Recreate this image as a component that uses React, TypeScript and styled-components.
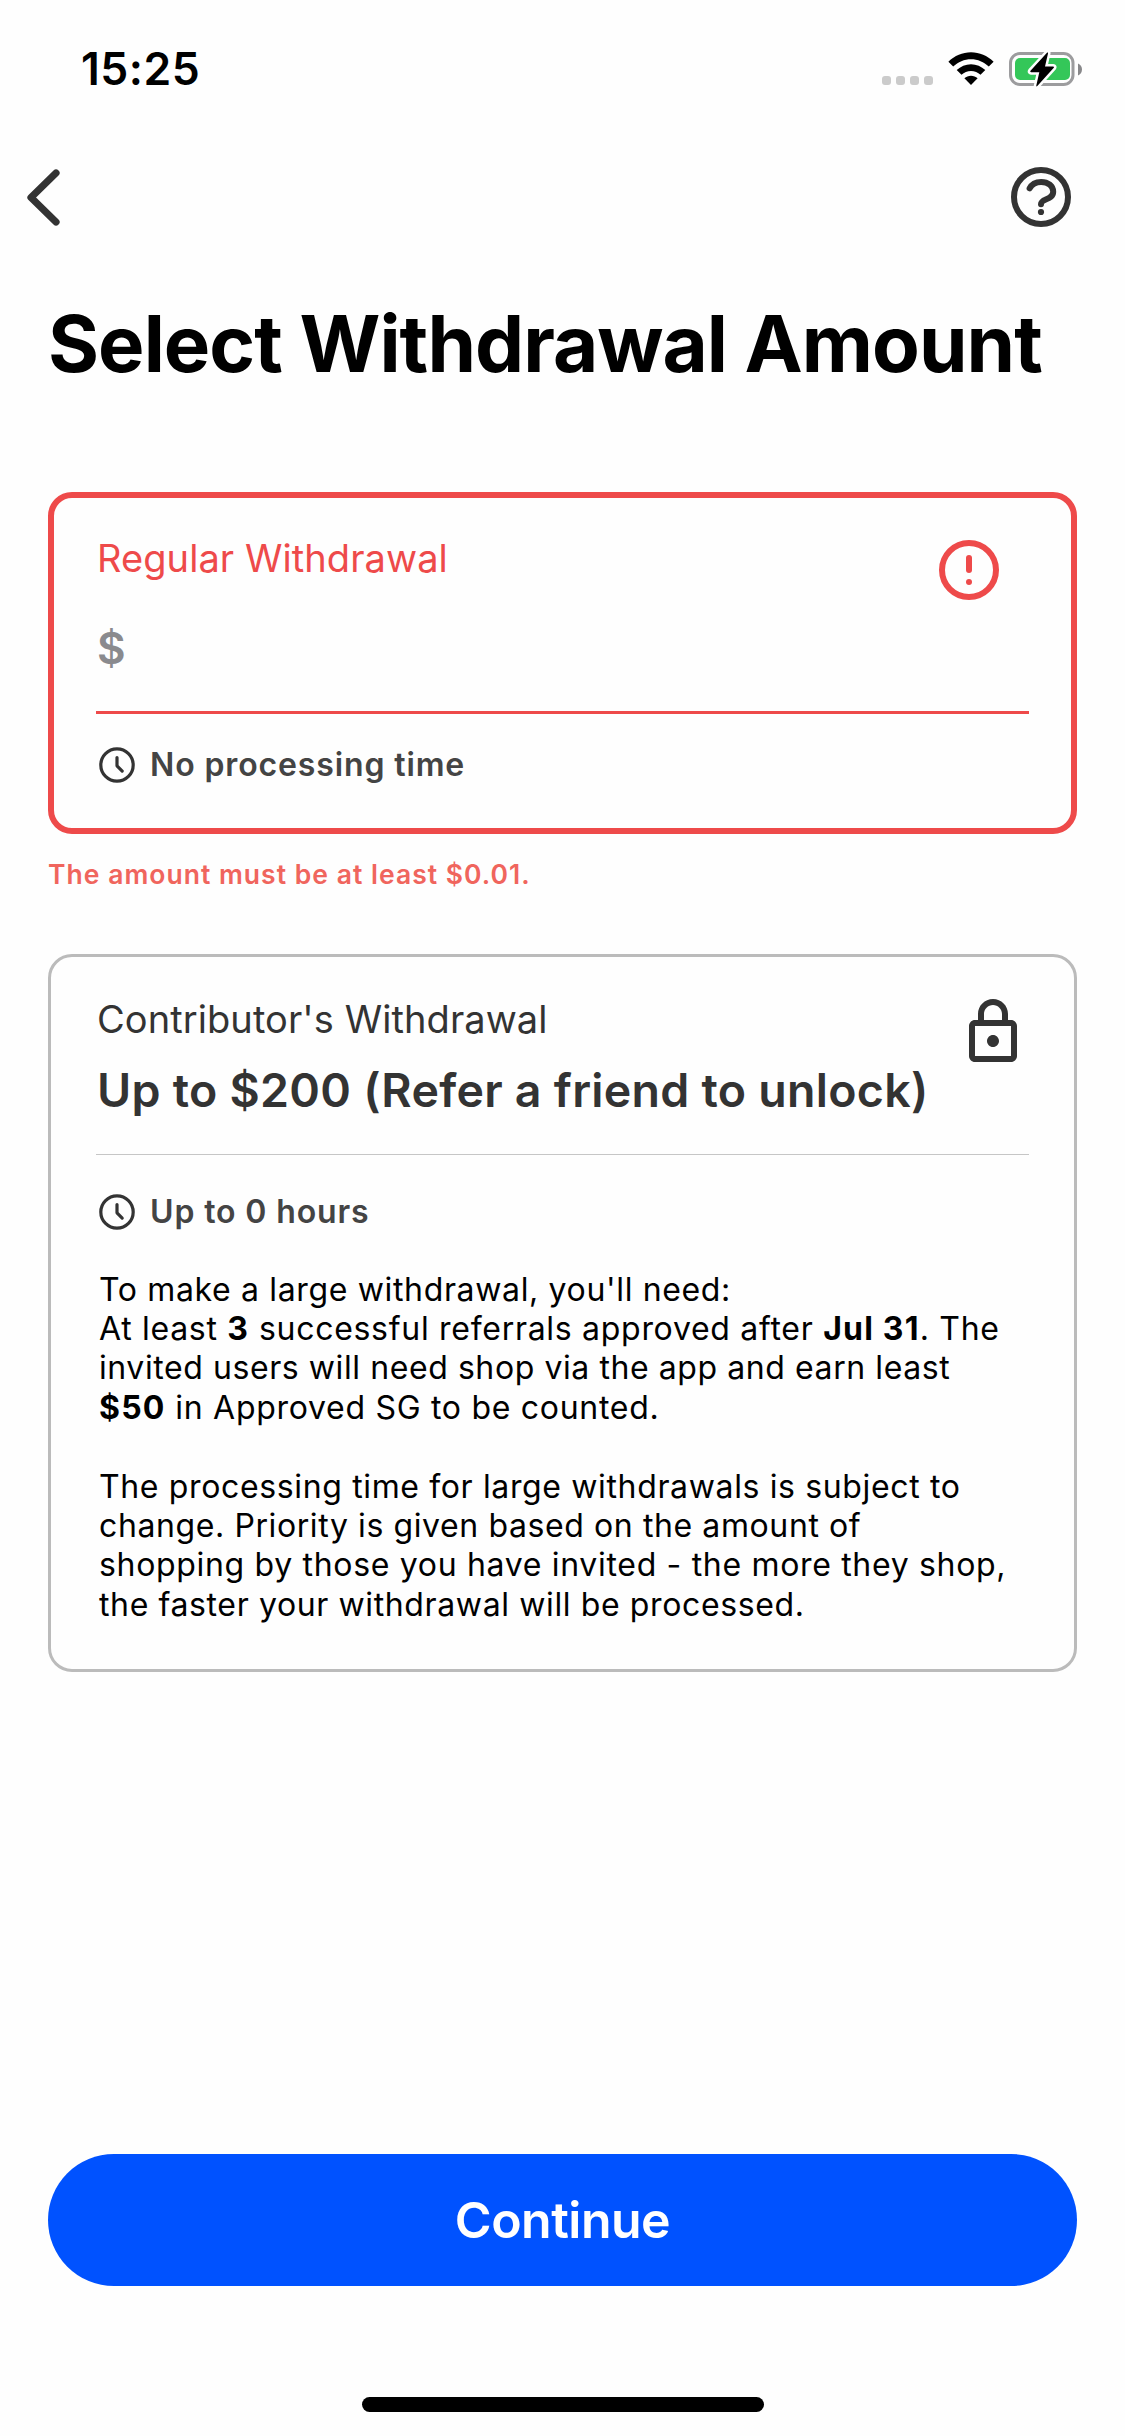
import React from "react";
import styled, { createGlobalStyle } from "styled-components";

const GlobalStyle = createGlobalStyle`
  body { margin: 0; background: #fefefe; }
  * { box-sizing: border-box; }
`;

const Screen = styled.main`
  display: flex;
  flex-direction: column;
  width: 1125px;
  height: 2436px;
  background: #fefefe;
  color: #000;
  font-family: Inter, "Liberation Sans", sans-serif;
  overflow: hidden;
`;

const StatusBar = styled.header`
  display: flex;
  justify-content: space-between;
  align-items: flex-start;
  height: 132px;
  padding: 44px 42px 0 81px;
`;

const Time = styled.time`
  font-size: 44.5px;
  line-height: 50px;
  font-weight: 600;
  letter-spacing: 0.5px;
`;

const StatusIcons = styled.div`
  display: flex;
  align-items: flex-end;
  height: 44px;
`;

const SignalDots = styled.div`
  display: flex;
  gap: 5px;
  margin: 0 15px 3px 0;
`;

const Dot = styled.i`
  width: 9px;
  height: 9px;
  border-radius: 3px;
  background: #cbcbcb;
`;

const NavBar = styled.nav`
  display: flex;
  justify-content: space-between;
  align-items: center;
  height: 130px;
  padding: 0 48px 0 21px;
`;

const IconButton = styled.button`
  display: flex;
  padding: 0;
  border: 0;
  background: none;
  color: #333;
`;

const Title = styled.h1`
  margin: 35px 0 101px 48px;
  font-size: 78px;
  line-height: 94px;
  font-weight: 700;
  letter-spacing: -0.95px;
  white-space: nowrap;
`;

const Card = styled.section<{ $error?: boolean }>`
  display: flex;
  flex-direction: column;
  flex: none;
  margin: 0 48px;
  height: ${(p) => (p.$error ? 342 : 718)}px;
  padding: ${(p) => (p.$error ? "36px 42px 0" : "39px 45px 0")};
  border: ${(p) => (p.$error ? "6px solid #ee4a4a" : "3px solid #bbb")};
  border-radius: 24px;
`;

const CardHead = styled.div<{ $iconInset?: number }>`
  display: flex;
  justify-content: space-between;
  align-items: flex-start;
  padding-right: ${(p) => p.$iconInset ?? 0}px;
`;

const Heading = styled.div`
  display: flex;
  flex-direction: column;
  padding-left: 1px;
  white-space: nowrap;
`;

const Label = styled.div<{ $error?: boolean }>`
  margin-top: ${(p) => (p.$error ? 1 : 0)}px;
  font-size: 38px;
  line-height: 46px;
  letter-spacing: 0.08px;
  color: ${(p) => (p.$error ? "#ee4a4a" : "#333")};
`;

const AmountField = styled.div`
  margin-top: 40px;
  font-size: 44px;
  line-height: 54px;
  font-weight: 600;
  color: #8a8a8e;
`;

const AmountText = styled.div`
  margin-top: 20px;
  width: 840px;
  margin-right: -40px;
  font-size: 46.5px;
  line-height: 56px;
  font-weight: 600;
  letter-spacing: 0.27px;
  color: #333;
`;

const Divider = styled.hr<{ $error?: boolean }>`
  width: 100%;
  height: ${(p) => (p.$error ? 3 : 1)}px;
  margin: 36px 0 0;
  border: 0;
  background: ${(p) => (p.$error ? "#ee4a4a" : "#c6c6c6")};
`;

const Timing = styled.div<{ $gap: number }>`
  display: flex;
  align-items: center;
  gap: 15px;
  height: 36px;
  margin-top: ${(p) => p.$gap}px;
  padding-left: 3px;
  font-size: 32px;
  line-height: 36px;
  font-weight: 600;
  letter-spacing: 0.87px;
  color: #444;
`;

const ErrorText = styled.p`
  margin: 24px 0 64px 48px;
  font-size: 26.5px;
  line-height: 32px;
  font-weight: 600;
  letter-spacing: 1.02px;
  color: #f0655d;
`;

const Terms = styled.div`
  display: flex;
  flex-direction: column;
  gap: 39.4px;
  margin: 39.5px 0 0 3px;
  font-size: 32px;
  line-height: 39.4px;
  white-space: nowrap;
`;

const TermsLine = styled.div<{ $tracking: number }>`
  letter-spacing: ${(p) => p.$tracking}px;

  b {
    letter-spacing: 1.2px;
  }
`;

const Footer = styled.footer`
  display: flex;
  flex-direction: column;
  align-items: center;
  margin-top: auto;
  padding: 0 48px 24px;
`;

const ContinueButton = styled.button`
  width: 100%;
  height: 132px;
  padding: 0;
  border: 0;
  border-radius: 66px;
  background: #0052ff;
  color: #fff;
  font: 600 50px/60px Inter, "Liberation Sans", sans-serif;
  letter-spacing: -0.5px;
`;

const HomeIndicator = styled.div`
  width: 402px;
  height: 15px;
  margin-top: 111px;
  border-radius: 8px;
  background: #000;
`;

const WifiSvg = styled.svg`
  margin: 0 15px 2px 0;
`;

const WifiIcon = () => (
  <WifiSvg width="46" height="34" viewBox="0 0 46 34">
    <path d="M0.4 9.8C6.6 3.7 14.5 0.3 23 0.3s16.400 3.400 22.600 9.500l-4.800 4.800C35.900 9.900 29.700 7.300 23 7.300S10.100 9.900 5.200 14.600Z" />
    <path d="M8.700 18.100C12.600 14.400 17.600 12.200 23 12.200s10.400 2.200 14.300 5.900l-4.800 4.700C29.900 20.400 26.600 19 23 19s-6.900 1.400-9.500 3.800Z" />
    <path d="M16.400 26.200c1.800-1.500 4.100-2.400 6.600-2.400s4.800.9 6.600 2.400L23 33Z" />
  </WifiSvg>
);

const BatteryIcon = () => (
  <svg width="74" height="36" viewBox="0 0 74 36">
    <rect x="1.500" y="1.500" width="62.500" height="31" rx="9.500" fill="none" stroke="#9c9c9e" strokeWidth="3" />
    <path d="M69 11.500c2.400.8 4 3.200 4 6s-1.600 5.200-4 6Z" fill="#88888a" />
    <rect x="6" y="6" width="55" height="22" rx="5" fill="#34c759" />
    <path
      d="M38.200 0.600 21.500 18.800q-.9 1.200.6 1.400H30.300L27.300 33.600q-.2 1.600 1 .5L44.800 15.800q.8-1.200-.7-1.400H36L39 1.500q.2-1.400-.8-.9Z"
      stroke="#fefefe"
      strokeWidth="5"
      strokeLinejoin="round"
      paintOrder="stroke"
    />
  </svg>
);

const BackIcon = () => (
  <svg width="44" height="66" viewBox="0 0 44 66" fill="none" stroke="currentColor" strokeWidth="7.200" strokeLinecap="round" strokeLinejoin="round">
    <path d="M35 9 10 33.500 35 58" />
  </svg>
);

const HelpIcon = () => (
  <svg width="72" height="72" viewBox="0 0 72 72" fill="none" stroke="currentColor" strokeWidth="6" strokeLinecap="round">
    <circle cx="36" cy="36" r="27" />
    <path d="M24.600 27.400C26.500 23.600 30.800 20.900 36.200 20.900c6.900 0 12 3.900 12 9.800 0 8.600-12.200 6.600-12.200 12.600" />
    <circle cx="36" cy="51" r="3.100" fill="currentColor" stroke="none" />
  </svg>
);

const AlertIcon = () => (
  <svg width="72" height="72" viewBox="0 0 72 72" fill="none" stroke="#ee4a4a" strokeWidth="6" strokeLinecap="round">
    <circle cx="36" cy="36" r="27" />
    <path d="M36 24v12" />
    <circle cx="36" cy="48" r="3" fill="#ee4a4a" stroke="none" />
  </svg>
);

const LockIcon = () => (
  <svg width="72" height="72" viewBox="0 0 24 24" fill="#333">
    <path d="M12 17c1.100 0 2-.9 2-2s-.9-2-2-2-2 .9-2 2 .9 2 2 2zm6-9h-1V6c0-2.760-2.240-5-5-5S7 3.240 7 6v2H6c-1.100 0-2 .9-2 2v10c0 1.100.9 2 2 2h12c1.100 0 2-.9 2-2V10c0-1.100-.9-2-2-2zM9 6c0-1.660 1.340-3 3-3s3 1.340 3 3v2H9V6zm9 14H6V10h12v10z" />
  </svg>
);

const ClockIcon = () => (
  <svg width="36" height="36" viewBox="0 0 36 36" fill="none" stroke="#333" strokeWidth="3.200" strokeLinecap="round" strokeLinejoin="round">
    <circle cx="18" cy="18" r="16.200" />
    <path d="M18 10.500v8.300l5.200 5.300" />
  </svg>
);

export default function App() {
  return (
    <Screen>
      <GlobalStyle />
      <StatusBar>
        <Time>15:25</Time>
        <StatusIcons>
          <SignalDots>
            <Dot />
            <Dot />
            <Dot />
            <Dot />
          </SignalDots>
          <WifiIcon />
          <BatteryIcon />
        </StatusIcons>
      </StatusBar>
      <NavBar>
        <IconButton aria-label="Back">
          <BackIcon />
        </IconButton>
        <IconButton aria-label="Help">
          <HelpIcon />
        </IconButton>
      </NavBar>
      <Title>Select Withdrawal Amount</Title>
      <Card $error>
        <CardHead $iconInset={24}>
          <Heading>
            <Label $error>Regular Withdrawal</Label>
            <AmountField>$</AmountField>
          </Heading>
          <AlertIcon />
        </CardHead>
        <Divider $error />
        <Timing $gap={33}>
          <ClockIcon />
          <span>No processing time</span>
        </Timing>
      </Card>
      <ErrorText>The amount must be at least $0.01.</ErrorText>
      <Card>
        <CardHead>
          <Heading>
            <Label>Contributor's Withdrawal</Label>
            <AmountText>Up to $200 (Refer a friend to unlock)</AmountText>
          </Heading>
          <LockIcon />
        </CardHead>
        <Divider />
        <Timing $gap={39}>
          <ClockIcon />
          <span>Up to 0 hours</span>
        </Timing>
        <Terms>
          <div>
            <TermsLine $tracking={0.65}>To make a large withdrawal, you'll need:</TermsLine>
            <TermsLine $tracking={0.71}>
              At least <b>3</b> successful referrals approved after <b>Jul 31</b>. The
            </TermsLine>
            <TermsLine $tracking={0.58}>invited users will need shop via the app and earn least</TermsLine>
            <TermsLine $tracking={0.71}>
              <b>$50</b> in Approved SG to be counted.
            </TermsLine>
          </div>
          <div>
            <TermsLine $tracking={0.64}>The processing time for large withdrawals is subject to</TermsLine>
            <TermsLine $tracking={0.6}>change. Priority is given based on the amount of</TermsLine>
            <TermsLine $tracking={0.68}>shopping by those you have invited - the more they shop,</TermsLine>
            <TermsLine $tracking={0.62}>the faster your withdrawal will be processed.</TermsLine>
          </div>
        </Terms>
      </Card>
      <Footer>
        <ContinueButton>Continue</ContinueButton>
        <HomeIndicator />
      </Footer>
    </Screen>
  );
}
